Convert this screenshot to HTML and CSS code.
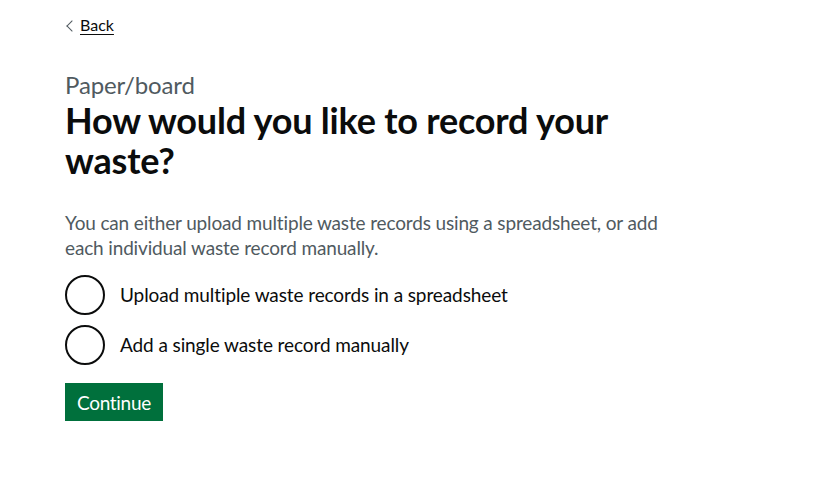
FILE: index.html
```html
<!DOCTYPE html>
<html lang="en">
<head>
<meta charset="utf-8">
<title>How would you like to record your waste?</title>
<link rel="stylesheet" href="styles.css">
</head>
<body>
<div class="container">
  <a href="#" class="back-link">Back</a>
  <main class="main">
    <span class="caption">Paper/board</span>
    <h1 class="heading">How would you like to record your waste?</h1>
    <form class="form">
      <p class="hint">You can either upload multiple waste records using a spreadsheet, or add each individual waste record manually.</p>
      <div class="radios">
        <label class="radio">
          <input type="radio" name="method" class="radio-input">
          <span class="radio-circle"></span>
          <span class="radio-label">Upload multiple waste records in a spreadsheet</span>
        </label>
        <label class="radio">
          <input type="radio" name="method" class="radio-input">
          <span class="radio-circle"></span>
          <span class="radio-label">Add a single waste record manually</span>
        </label>
      </div>
      <button type="button" class="button">Continue</button>
    </form>
  </main>
</div>
</body>
</html>
```

FILE: styles.css
```css
* { box-sizing: border-box; }
html, body { margin: 0; padding: 0; background: #fff; }
body {
  font-family: Lato, "Liberation Sans", sans-serif;
  color: #0b0c0c;
}
.container {
  padding: 0 30px 0 65px;
  display: flex;
  flex-direction: column;
  align-items: flex-start;
}
.back-link {
  position: relative;
  margin-top: 15px;
  margin-bottom: 15px;
  padding-left: 15px;
  font-size: 16px;
  line-height: 20px;
  color: #0b0c0c;
  text-decoration: underline;
  text-decoration-thickness: 1px;
  text-underline-offset: 3px;
}
.back-link::before {
  content: "";
  position: absolute;
  left: 3px;
  top: calc(50% - 3px);
  width: 7px;
  height: 7px;
  border-left: 1px solid #505a5f;
  border-bottom: 1px solid #505a5f;
  transform: rotate(45deg);
}
.main {
  padding-top: 20px;
  width: 640px;
}
.caption {
  display: block;
  font-size: 24px;
  line-height: 30px;
  letter-spacing: -0.15px;
  color: #505a5f;
}
.heading {
  margin: 0 0 30px;
  font-size: 36px;
  line-height: 40px;
  letter-spacing: -0.2px;
  font-weight: 700;
}
.form { display: flex; flex-direction: column; align-items: flex-start; }
.hint {
  margin: 0 0 15px;
  max-width: 610px;
  font-size: 19px;
  line-height: 25px;
  letter-spacing: -0.15px;
  color: #505a5f;
}
.radios {
  display: flex;
  flex-direction: column;
  gap: 10px;
  margin-bottom: 18px;
}
.radio {
  display: flex;
  align-items: center;
  min-height: 40px;
  position: relative;
}
.radio-input { position: absolute; opacity: 0; width: 40px; height: 40px; margin: 0; }
.radio-circle {
  width: 40px;
  height: 40px;
  border: 2px solid #0b0c0c;
  border-radius: 50%;
  flex: none;
}
.radio-label {
  padding: 6px 15px 7px;
  font-size: 19px;
  line-height: 25px;
  letter-spacing: -0.1px;
}
.button {
  font-family: inherit;
  font-size: 19px;
  line-height: 1;
  letter-spacing: -0.3px;
  padding: 8px 10px 7px;
  border: 2px solid transparent;
  border-radius: 0;
  background: #00703c;
  color: #fff;
  box-shadow: 0 2px 0 #002d18;
  cursor: pointer;
}
```
